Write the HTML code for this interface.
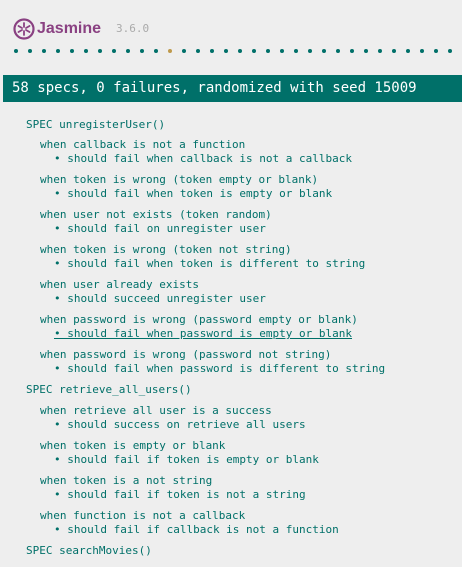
<!DOCTYPE html>
<html><head><meta charset="utf-8"><style>
body{margin:0;width:462px;height:567px;background:#eee;overflow:hidden;position:relative;font-family:"DejaVu Sans Mono","Liberation Mono",monospace;}
.l{position:absolute;font-size:11px;line-height:14px;color:#007069;white-space:pre;margin-top:1px}
.s{left:26px}.w{left:40px}.b{left:54px}
.dot{position:absolute;top:49px;width:4px;height:4px;border-radius:50%;background:#007069}
</style></head><body>
<svg style="position:absolute;left:13px;top:18px" width="22" height="22" viewBox="0 0 22 22">
<circle cx="11" cy="11" r="9.5" fill="none" stroke="#8a4182" stroke-width="2.2"/>
<g stroke="#8a4182" stroke-width="1.8" stroke-linecap="round">
<line x1="11" y1="5" x2="11" y2="9"/><line x1="11" y1="13" x2="11" y2="17"/>
<line x1="5.5" y1="8" x2="9" y2="10"/><line x1="13" y1="12" x2="16.5" y2="14"/>
<line x1="5.5" y1="14" x2="9" y2="12"/><line x1="13" y1="10" x2="16.5" y2="8"/>
</g></svg>
<div style="position:absolute;left:37px;top:18px;font-family:'Liberation Sans',sans-serif;font-weight:bold;font-size:16px;color:#8a4182;line-height:22px">Jasmine</div>
<div style="position:absolute;left:116px;top:22px;font-size:11px;color:#aaa;line-height:14px">3.6.0</div>
<div id="dots"></div>
<div style="position:absolute;left:3px;top:75px;width:459px;height:27px;background:#007069;color:#fff;font-size:14px;line-height:27px;padding-left:9px;box-sizing:border-box;white-space:pre">58 specs, 0 failures, randomized with seed 15009</div>
<div class="l s" style="top:117px">SPEC unregisterUser()</div>
<div class="l w" style="top:137px">when callback is not a function</div>
<div class="l b" style="top:151px">• should fail when callback is not a callback</div>
<div class="l w" style="top:172px">when token is wrong (token empty or blank)</div>
<div class="l b" style="top:186px">• should fail when token is empty or blank</div>
<div class="l w" style="top:207px">when user not exists (token random)</div>
<div class="l b" style="top:221px">• should fail on unregister user</div>
<div class="l w" style="top:242px">when token is wrong (token not string)</div>
<div class="l b" style="top:256px">• should fail when token is different to string</div>
<div class="l w" style="top:277px">when user already exists</div>
<div class="l b" style="top:291px">• should succeed unregister user</div>
<div class="l w" style="top:312px">when password is wrong (password empty or blank)</div>
<div class="l b" style="top:326px;text-decoration:underline">• should fail when password is empty or blank</div>
<div class="l w" style="top:347px">when password is wrong (password not string)</div>
<div class="l b" style="top:361px">• should fail when password is different to string</div>
<div class="l s" style="top:382px">SPEC retrieve_all_users()</div>
<div class="l w" style="top:403px">when retrieve all user is a success</div>
<div class="l b" style="top:417px">• should success on retrieve all users</div>
<div class="l w" style="top:438px">when token is empty or blank</div>
<div class="l b" style="top:452px">• should fail if token is empty or blank</div>
<div class="l w" style="top:473px">when token is a not string</div>
<div class="l b" style="top:487px">• should fail if token is not a string</div>
<div class="l w" style="top:508px">when function is not a callback</div>
<div class="l b" style="top:522px">• should fail if callback is not a function</div>
<div class="l s" style="top:543px">SPEC searchMovies()</div>
<script>
var d=document.getElementById('dots'),h='';
for(var i=0;i<32;i++){h+='<div class="dot" style="left:'+(14+14*i)+'px'+(i==11?';background:#bf9a4c':'')+'"></div>';}
d.innerHTML=h;
</script>
</body></html>
